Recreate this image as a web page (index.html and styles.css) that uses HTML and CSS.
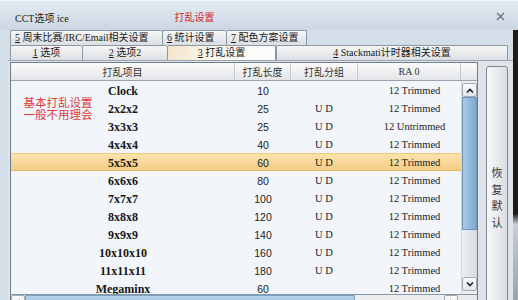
FILE: index.html
```html
<!DOCTYPE html>
<html>
<head>
    <meta charset="UTF-8">
    <title>CCT选项 ice</title>
    <link rel="stylesheet" href="styles.css">
</head>
<body>
    <div class="titlebar">
        <span class="title">CCT选项 ice</span>
        <span class="title-red">打乱设置</span>
        <span class="close">
            <svg width="9" height="9" viewBox="0 0 9 9"><path d="M1 1L8 8M8 1L1 8" stroke="#6b7480" stroke-width="1.3" fill="none"/></svg>
        </span>
    </div>

    <div class="frame">
        <div class="main">
            <!-- Tabs -->
            <div class="tabrow">
                <div class="tab w152"><u>5</u> 周末比赛/IRC/Email相关设置</div>
                <div class="tab w64"><u>6</u> 统计设置</div>
                <div class="tab w80"><u>7</u> 配色方案设置</div>
            </div>
            <div class="tabrow lower">
                <div class="tab w72 center"><u>1</u> 选项</div>
                <div class="tab w85 center"><u>2</u> 选项2</div>
                <div class="tab w109 center selected"><u>3</u> 打乱设置</div>
                <div class="tab w232 center"><u>4</u> Stackmati计时器相关设置</div>
            </div>

            <div class="panel">
                <div class="table">
                    <div class="head">
                        <div class="hcell">打乱项目</div>
                        <div class="hcell">打乱长度</div>
                        <div class="hcell">打乱分组</div>
                        <div class="hcell latin">RA 0</div>
                        <div class="hcell"></div>
                    </div>
                    <div class="body">
                        <div class="rows">
                            <div class="row"><span class="name">Clock</span><span class="len">10</span><span class="grp"></span><span class="ra">12 Trimmed</span></div>
                            <div class="row"><span class="name">2x2x2</span><span class="len">25</span><span class="grp">U D</span><span class="ra">12 Trimmed</span></div>
                            <div class="row"><span class="name">3x3x3</span><span class="len">25</span><span class="grp">U D</span><span class="ra">12 Untrimmed</span></div>
                            <div class="row"><span class="name">4x4x4</span><span class="len">40</span><span class="grp">U D</span><span class="ra">12 Trimmed</span></div>
                            <div class="row active"><span class="name">5x5x5</span><span class="len">60</span><span class="grp">U D</span><span class="ra">12 Trimmed</span></div>
                            <div class="row"><span class="name">6x6x6</span><span class="len">80</span><span class="grp">U D</span><span class="ra">12 Trimmed</span></div>
                            <div class="row"><span class="name">7x7x7</span><span class="len">100</span><span class="grp">U D</span><span class="ra">12 Trimmed</span></div>
                            <div class="row"><span class="name">8x8x8</span><span class="len">120</span><span class="grp">U D</span><span class="ra">12 Trimmed</span></div>
                            <div class="row"><span class="name">9x9x9</span><span class="len">140</span><span class="grp">U D</span><span class="ra">12 Trimmed</span></div>
                            <div class="row"><span class="name">10x10x10</span><span class="len">160</span><span class="grp">U D</span><span class="ra">12 Trimmed</span></div>
                            <div class="row"><span class="name">11x11x11</span><span class="len">180</span><span class="grp">U D</span><span class="ra">12 Trimmed</span></div>
                            <div class="row"><span class="name">Megaminx</span><span class="len">60</span><span class="grp"></span><span class="ra">12 Trimmed</span></div>
                        </div>
                        <div class="vscroll">
                            <div class="sbtn">
                                <svg width="8" height="5" viewBox="0 0 8 5"><path d="M1 4.5L4 1.5L7 4.5" stroke="#222" stroke-width="1.6" fill="none"/></svg>
                            </div>
                            <div class="vthumb"></div>
                            <div class="vtrack"></div>
                            <div class="sbtn">
                                <svg width="8" height="5" viewBox="0 0 8 5"><path d="M1 0.5L4 3.5L7 0.5" stroke="#222" stroke-width="1.6" fill="none"/></svg>
                            </div>
                        </div>
                    </div>
                    <div class="hscroll">
                        <div class="sbtn">
                            <svg width="5" height="8" viewBox="0 0 5 8"><path d="M4 1L1 4L4 7" stroke="#222" stroke-width="1.4" fill="none"/></svg>
                        </div>
                        <div class="hthumb"></div>
                        <div class="htrack"></div>
                        <div class="sbtn">
                            <svg width="5" height="8" viewBox="0 0 5 8"><path d="M1 1L4 4L1 7" stroke="#222" stroke-width="1.4" fill="none"/></svg>
                        </div>
                    </div>
                </div>

                <div class="side">
                    <button class="reset">恢<br>复<br>默<br>认</button>
                </div>
            </div>
        </div>
        <div class="edge"></div>
    </div>

    <!-- red annotation over the table -->
    <div class="note">基本打乱设置<br>一般不用理会</div>
</body>
</html>
```

FILE: styles.css
```css
body {
    width: 518px;
    height: 300px;
    margin: 0;
    overflow: hidden;
    position: relative;
    background: #d2dce7;
    font-family: "Liberation Serif", "Noto Sans CJK SC", serif;
    font-size: 10px;
    color: #222;
}

.titlebar {
    height: 30px;
    display: flex;
    align-items: center;
    padding-left: 15px;
    box-sizing: border-box;
    background: linear-gradient(#e4ebf2, #cbd6e2);
    border-top: 1px solid #f2f6fa;
}

.title {
    font-size: 10px;
    color: #222;
    margin-top: 3px;
}

.title-red {
    margin-left: 106px;
    margin-top: 1px;
    color: #d42a2a;
    font-size: 10px;
}

.close {
    margin-left: auto;
    margin-right: 13px;
    margin-top: 2px;
    display: flex;
}

.frame {
    display: flex;
    height: 270px;
}

.main {
    width: 513px;
    display: flex;
    flex-direction: column;
    background: #d4dee8;
}

.edge {
    flex: 1;
    background: linear-gradient(#1c1c1c 0, #1c1c1c 68%, #c9ced4 72%, #9aa2ab 100%);
}

/* Tabs */
.tabrow {
    height: 15px;
    flex-shrink: 0;
    display: flex;
    padding-left: 10px;
}

.tab {
    box-sizing: border-box;
    height: 15px;
    border: 1px solid #8b97a5;
    border-bottom: none;
    border-right: none;
    border-radius: 2px 2px 0 0;
    background: linear-gradient(#f6f6f6, #dcdfe3);
    font-family: "Liberation Serif", "Noto Sans CJK SC", serif;
    font-size: 10px;
    line-height: 13px;
    padding-left: 4px;
    white-space: nowrap;
    color: #1a1a1a;
}

.tab:last-child {
    border-right: 1px solid #8b97a5;
}

.tab.center {
    text-align: center;
    padding-left: 0;
}

.tab.selected {
    background: linear-gradient(to right, #f3e6cc, #fbf7ee 45%, #fdfdfd);
    border-right: 1px solid #8b97a5;
}

.w152 { width: 152px; }
.w64 { width: 64px; }
.w80 { width: 81px; border-right: 1px solid #8b97a5; }
.w72 { width: 72px; }
.w85 { width: 85px; }
.w109 { width: 109px; }
.w232 { width: 232px; }

/* Panel */
.panel {
    flex: 1;
    min-height: 0;
    display: flex;
    align-items: flex-start;
    padding-top: 1px;
    border-top: 1px solid #98a4b1;
    background: #dfe4ea;
    margin-left: 8px;
    padding-left: 2px;
    overflow: hidden;
}

.table {
    width: 468px;
    flex-shrink: 0;
    box-sizing: border-box;
    border: 1px solid #6f7c8a;
    border-bottom: none;
    background: #f2f6fa;
    display: flex;
    flex-direction: column;
}

.head {
    display: grid;
    grid-template-columns: 224px 56px 67px 103px 16px;
    height: 18px;
    flex-shrink: 0;
    box-sizing: border-box;
    border-bottom: 1px solid #9aa3ad;
    background: linear-gradient(#fbfbfb, #e3e5e8);
}

.hcell {
    border-right: 1px solid #c6cbd1;
    text-align: center;
    font-family: "Noto Sans CJK SC", sans-serif;
    font-size: 10px;
    line-height: 17px;
    color: #333;
}

.hcell.latin {
    font-family: "Liberation Serif", serif;
}

.hcell:last-child {
    border-right: none;
}

.body {
    display: flex;
    height: 213px;
    flex-shrink: 0;
    overflow: hidden;
}

.rows {
    width: 450px;
}

.row {
    display: grid;
    grid-template-columns: 224px 56px 67px 103px;
    height: 18px;
    box-sizing: border-box;
    padding-top: 2px;
    line-height: 16px;
    text-align: center;
}

.row.active {
    background: linear-gradient(#fbe3ae, #f4cd86);
    border-top: 1px solid #f0c878;
    border-bottom: 1px solid #e9b964;
    padding-top: 1px;
}

.name {
    font-family: "Liberation Serif", serif;
    font-weight: bold;
    font-size: 12px;
    color: #161616;
}

.len {
    font-family: "Liberation Sans", sans-serif;
    font-size: 10.5px;
}

.grp {
    font-size: 10.5px;
    padding-right: 1px;
}

.ra {
    font-size: 10.5px;
    padding-left: 10px;
}

/* Scrollbars */
.vscroll {
    width: 16px;
    display: flex;
    flex-direction: column;
    padding: 2px 0 3px;
    box-sizing: border-box;
    background: #eceef0;
    border-left: 1px solid #d3d7dc;
}

.sbtn {
    width: 15px;
    height: 14px;
    flex-shrink: 0;
    box-sizing: border-box;
    border: 1px solid #a2aab3;
    border-radius: 2px;
    background: linear-gradient(#fafafa, #e2e5e8);
    display: flex;
    align-items: center;
    justify-content: center;
}

.vthumb {
    height: 133px;
    flex-shrink: 0;
    background: linear-gradient(to right, #a9c9e5, #7fa8cf);
    border: 1px solid #6b93b8;
    box-sizing: border-box;
}

.vtrack {
    flex: 1;
    background: linear-gradient(to right, #eef0f2, #d7dbe0);
}

.hscroll {
    height: 15px;
    flex-shrink: 0;
    display: flex;
    background: #e8eaec;
    border-top: 1px solid #8995a2;
}

.hscroll .sbtn {
    height: 15px;
    width: 14px;
}

.hthumb {
    width: 330px;
    background: linear-gradient(#b7d3ea, #94bbdd);
    border: 1px solid #7aa2c6;
    box-sizing: border-box;
}

.htrack {
    width: 89px;
    background: #eceef0;
}

/* Side button */
.side {
    padding-left: 8px;
    padding-top: 4px;
}

.reset {
    width: 22px;
    height: 262px;
    padding: 0;
    border: 1px solid #7d8590;
    border-radius: 3px;
    background: linear-gradient(to right, #f8f8f8, #dadde1);
    font-family: "Noto Sans CJK SC", sans-serif;
    font-size: 11px;
    line-height: 16.5px;
    color: #333;
}

/* Annotation */
.note {
    position: absolute;
    left: 20px;
    top: 96px;
    width: 76px;
    text-align: center;
    font-family: "Noto Sans CJK SC", sans-serif;
    font-size: 11.5px;
    line-height: 12px;
    color: #e03a3a;
}
```
